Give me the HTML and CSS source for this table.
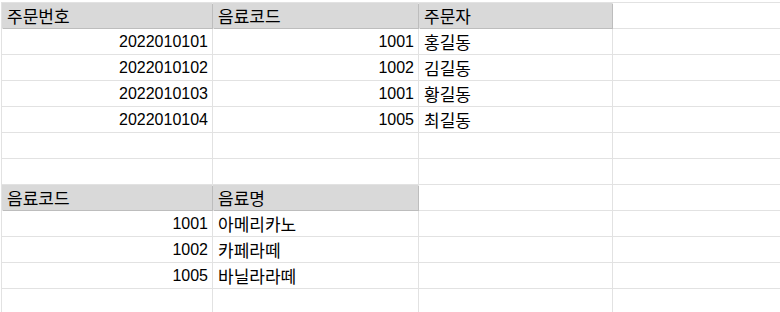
FILE: index.html
```html
<!DOCTYPE html>
<html lang="ko">
<head>
<meta charset="utf-8">
<link rel="stylesheet" href="styles.css">
</head>
<body>
<div class="sheet">
  <div class="c h"><span class="k">주문번호</span></div><div class="c h"><span class="k">음료코드</span></div><div class="c h"><span class="k">주문자</span></div><div class="c"></div>
  <div class="c n">2022010101</div><div class="c n">1001</div><div class="c"><span class="k">홍길동</span></div><div class="c"></div>
  <div class="c n">2022010102</div><div class="c n">1002</div><div class="c"><span class="k">김길동</span></div><div class="c"></div>
  <div class="c n">2022010103</div><div class="c n">1001</div><div class="c"><span class="k">황길동</span></div><div class="c"></div>
  <div class="c n">2022010104</div><div class="c n">1005</div><div class="c"><span class="k">최길동</span></div><div class="c"></div>
  <div class="c"></div><div class="c"></div><div class="c"></div><div class="c"></div>
  <div class="c"></div><div class="c"></div><div class="c"></div><div class="c"></div>
  <div class="c h"><span class="k">음료코드</span></div><div class="c h"><span class="k">음료명</span></div><div class="c"></div><div class="c"></div>
  <div class="c n">1001</div><div class="c"><span class="k">아메리카노</span></div><div class="c"></div><div class="c"></div>
  <div class="c n">1002</div><div class="c"><span class="k">카페라떼</span></div><div class="c"></div><div class="c"></div>
  <div class="c n">1005</div><div class="c"><span class="k">바닐라라떼</span></div><div class="c"></div><div class="c"></div>
  <div class="c"></div><div class="c"></div><div class="c"></div><div class="c"></div>
</div>
</body>
</html>
```
FILE: styles.css
```css
html, body {
  margin: 0;
  padding: 0;
  background: #ffffff;
  overflow: hidden;
}
.sheet {
  margin: 2px 0 0 1px;
  padding: 1px 0 0 1px;
  background: #e2e2e2;
  display: grid;
  grid-template-columns: 210px 205px 193px 167px;
  grid-auto-rows: 25px;
  gap: 1px;
  width: 778px;
  font-family: "Liberation Sans", "Noto Sans CJK KR", sans-serif;
  font-size: 16px;
  color: #000000;
}
.c {
  background: #ffffff;
  line-height: 25px;
  padding: 0 4px 0 5px;
  white-space: nowrap;
  overflow: hidden;
}
.k {
  font-family: "Noto Sans CJK KR", sans-serif;
  font-size: 17px;
}
.h {
  background: #d9d9d9;
  box-shadow: 1px 1px 0 #bdbdbd;
}
.n {
  text-align: right;
}
```
